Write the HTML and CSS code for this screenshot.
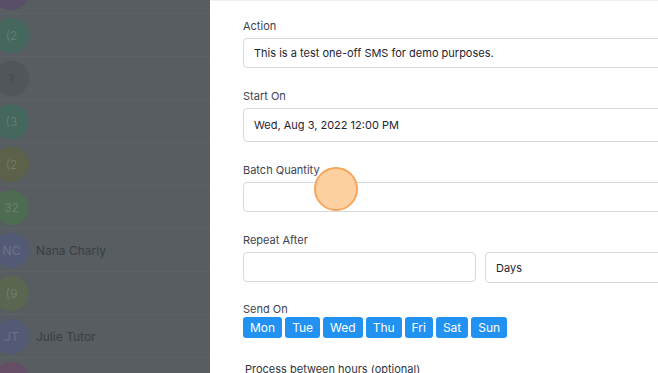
FILE: index.html
```html
<!DOCTYPE html>
<html lang="en">
<head>
    <meta charset="UTF-8">
    <meta name="viewport" content="width=device-width, initial-scale=1.0">
    <title>Schedule Action</title>
    <link rel="stylesheet" href="styles.css">
</head>
<body>
    <div class="screen">
        <!-- Contact list, dimmed behind the drawer -->
        <aside class="contacts">
            <ul class="contact-list">
                <li class="contact"><span class="avatar purple"></span><span class="name"></span></li>
                <li class="contact"><span class="avatar teal">(2</span><span class="name"></span></li>
                <li class="contact"><span class="avatar grey">?</span><span class="name"></span></li>
                <li class="contact"><span class="avatar teal">(3</span><span class="name"></span></li>
                <li class="contact"><span class="avatar olive">(2</span><span class="name"></span></li>
                <li class="contact"><span class="avatar green">32</span><span class="name"></span></li>
                <li class="contact"><span class="avatar blue">NC</span><span class="name">Nana Charly</span></li>
                <li class="contact"><span class="avatar moss">(9</span><span class="name"></span></li>
                <li class="contact"><span class="avatar blue">JT</span><span class="name">Julie Tutor</span></li>
                <li class="contact"><span class="avatar plum">GG</span><span class="name">Geraldine Gallinger</span></li>
            </ul>
        </aside>

        <section class="drawer">
            <div class="field">
                <label>Action</label>
                <div class="input">This is a test one-off SMS for demo purposes.</div>
            </div>

            <div class="field">
                <label>Start On</label>
                <div class="input tall">Wed, Aug 3, 2022 12:00 PM</div>
            </div>

            <div class="field">
                <label>Batch Quantity</label>
                <div class="input"></div>
            </div>

            <div class="field">
                <label>Repeat After</label>
                <div class="row">
                    <div class="input"></div>
                    <div class="input select">Days</div>
                </div>
            </div>

            <div class="field days-field">
                <label>Send On</label>
                <div class="days">
                    <button>Mon</button>
                    <button>Tue</button>
                    <button>Wed</button>
                    <button>Thu</button>
                    <button>Fri</button>
                    <button>Sat</button>
                    <button>Sun</button>
                </div>
            </div>

            <div class="field hours-field">
                <label>Process between hours (optional)</label>
            </div>

            <!-- click marker -->
            <span class="click-dot"></span>
        </section>
    </div>
</body>
</html>
```

FILE: styles.css
```css
html, body {
    margin: 0;
    padding: 0;
    overflow: hidden;
}
body {
    font-family: Inter, "Noto Sans", Arial, sans-serif;
    width: 658px;
    height: 373px;
    background: #575d60;
}
.screen {
    display: flex;
    height: 373px;
}
.contacts {
    width: 210px;
    flex-shrink: 0;
    background: #575d60;
    overflow: hidden;
}
.contact-list {
    list-style: none;
    margin: -29px 0 0 0;
    padding: 0;
}
.contact {
    display: flex;
    align-items: center;
    gap: 7px;
    height: 43px;
    border-bottom: 1px solid #5c6265;
    box-sizing: border-box;
}
.avatar {
    width: 35px;
    height: 35px;
    border-radius: 50%;
    margin-left: -6px;
    flex-shrink: 0;
    display: flex;
    align-items: center;
    justify-content: center;
    font-size: 12px;
    color: rgba(255, 255, 255, 0.16);
}
.purple { background: #594f68; }
.teal { background: #44675e; }
.grey { background: #50565a; color: #45494c; }
.olive { background: #5b6249; }
.green { background: #4d6c52; }
.blue { background: #525a76; }
.moss { background: #5a6650; }
.plum { background: #664f66; }
.name {
    font-size: 12px;
    color: #3a3f42;
}
.drawer {
    position: relative;
    width: 541px;
    flex-shrink: 0;
    background: #fff;
    padding: 17px 33px 0 33px;
    box-sizing: border-box;
    border-top: 1px solid #f0f0f0;
}
.field {
    margin-bottom: 20px;
}
.field label {
    display: block;
    font-size: 11px;
    line-height: 16px;
    color: #3d4450;
    margin-bottom: 4px;
}
.input {
    height: 30px;
    box-sizing: border-box;
    border: 1px solid #d6d8dc;
    border-radius: 4px;
    padding: 0 10px;
    display: flex;
    align-items: center;
    font-size: 11px;
    color: #1f2430;
}
.input.tall {
    height: 34px;
}
.row {
    display: flex;
    align-items: flex-start;
    gap: 9px;
}
.row .input {
    flex: 1;
}
.row .select {
    height: 31px;
}
.days-field {
    margin-top: -2px;
}
.days-field label {
    margin-bottom: 0;
}
.days {
    display: flex;
    gap: 3px;
}
.days button {
    background: #2192f2;
    color: #fff;
    border: none;
    border-radius: 3px;
    height: 21px;
    padding: 0 7px;
    font-family: inherit;
    font-size: 12px;
}
.hours-field {
    margin-top: 23px;
}
.hours-field label {
    padding-left: 2px;
    color: #2f3540;
}
.click-dot {
    position: absolute;
    left: 104px;
    top: 166px;
    width: 40px;
    height: 40px;
    border-radius: 50%;
    background: #fdd0a2;
    border: 2px solid #f6a65c;
}
```
